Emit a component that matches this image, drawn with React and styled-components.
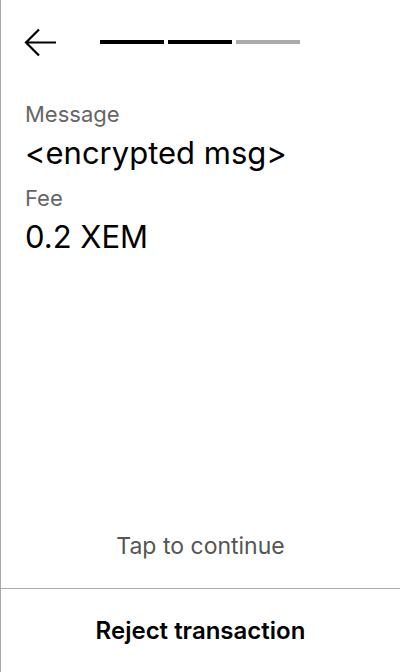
import React from 'react';
import styled, { createGlobalStyle } from 'styled-components';

const GlobalStyle = createGlobalStyle`
  html, body {
    margin: 0;
    padding: 0;
    background: #fff;
  }
  body {
    font-family: 'Inter', 'Noto Sans', sans-serif;
    color: #000;
  }
`;

const steps = [true, true, false];

const App = () => (
  <>
    <GlobalStyle />
    <Screen>
      <Header>
        <BackButton aria-label="Back">
          <svg width="34" height="30" viewBox="0 0 34 30" fill="none">
            <path
              d="M32 14.5H3M15 1.5L2 14.5L15 27.5"
              stroke="#000"
              strokeWidth="2.2"
            />
          </svg>
        </BackButton>
        <Progress>
          {steps.map((done, i) => (
            <Step key={i} done={done} />
          ))}
        </Progress>
      </Header>

      <Details>
        <Label>Message</Label>
        <Value>&lt;encrypted msg&gt;</Value>
        <Label>Fee</Label>
        <Value>0.2 XEM</Value>
      </Details>

      <Hint>Tap to continue</Hint>
      <Footer>
        <RejectButton>Reject transaction</RejectButton>
      </Footer>
    </Screen>
  </>
);

export default App;

const Screen = styled.div`
  height: 672px;
  box-sizing: border-box;
  border-left: 1px solid #aaa;
  display: flex;
  flex-direction: column;
`;

const Header = styled.div`
  display: flex;
  align-items: center;
  padding: 28px 0 0 23px;
  height: 30px;
`;

const BackButton = styled.button`
  border: none;
  background: none;
  padding: 0;
  width: 34px;
  height: 30px;
  display: flex;
  cursor: pointer;
`;

const Progress = styled.div`
  display: flex;
  gap: 4px;
  margin-left: 42px;
  margin-top: -2px;
`;

const Step = styled.div`
  width: 64px;
  height: 4px;
  background: ${(p) => (p.done ? '#000' : '#aaa')};
`;

const Details = styled.div`
  padding: 41px 24px 0;
  flex: 1;
`;

const Label = styled.div`
  font-size: 22px;
  line-height: 30px;
  color: #666;
  margin-bottom: 4px;
`;

const Value = styled.div`
  font-size: 31px;
  line-height: 40px;
  color: #000;
  margin-bottom: 10px;
`;

const Hint = styled.div`
  text-align: center;
  font-size: 23px;
  color: #555;
  padding-bottom: 28px;
`;

const Footer = styled.div`
  border-top: 1px solid #aaa;
  height: 83px;
  display: flex;
  align-items: center;
  justify-content: center;
`;

const RejectButton = styled.button`
  border: none;
  background: none;
  font-family: 'Inter', sans-serif;
  font-size: 24px;
  font-weight: 600;
  color: #000;
  cursor: pointer;
  padding: 0;
`;
